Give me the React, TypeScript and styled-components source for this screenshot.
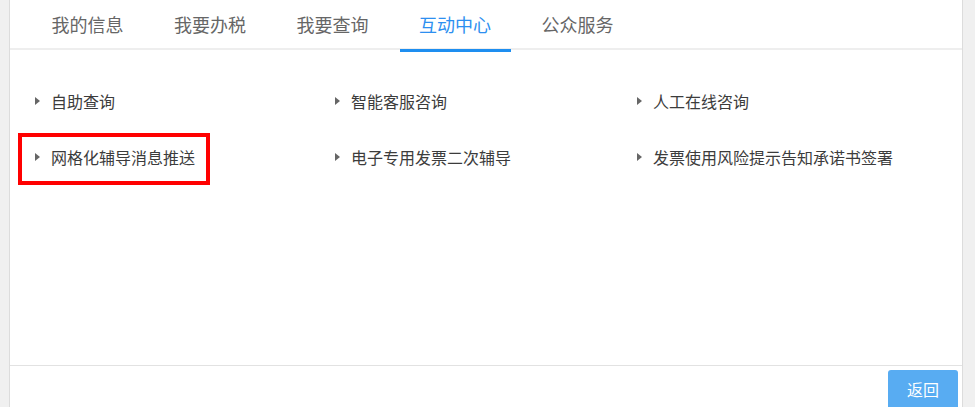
import React from "react";
import styled, { createGlobalStyle } from "styled-components";

const Global = createGlobalStyle`
  html, body { margin: 0; padding: 0; background: #f0f0f0; }
  body { font-family: "Microsoft YaHei", "Noto Sans CJK SC", "Noto Sans", sans-serif; }
`;

const Page = styled.div`
  width: 975px;
  height: 407px;
  overflow: hidden;
  background: #f0f0f0;
`;

const Panel = styled.div`
  margin-left: 9px;
  width: 952px;
  height: 407px;
  background: #fff;
  border-left: 1px solid #dcdcdc;
  border-right: 1px solid #dcdcdc;
  display: flex;
  flex-direction: column;
`;

const TabBar = styled.div`
  height: 48px;
  border-bottom: 2px solid #eeeeee;
  display: flex;
  gap: 11.5px;
  padding-left: 22px;
  flex-shrink: 0;
`;

const Tab = styled.div<{ $active?: boolean }>`
  height: 47px;
  margin-bottom: -2px;
  padding: 0 19.5px 2px;
  display: flex;
  align-items: center;
  font-size: 18px;
  color: ${(p) => (p.$active ? "#2d8ff0" : "#666")};
  border-bottom: 3px solid ${(p) => (p.$active ? "#1e8ef0" : "transparent")};
`;

const Content = styled.div`
  height: 315px;
  flex-shrink: 0;
  padding: 23px 0 0 25px;
  box-sizing: border-box;
  display: grid;
  grid-template-columns: 300px 302px 300px;
  grid-auto-rows: 56px;
  align-content: start;
`;

const Item = styled.div<{ $marked?: boolean }>`
  position: relative;
  display: flex;
  align-items: center;
  font-size: 16px;
  color: #3c3c3c;
  &::after {
    content: "";
    display: ${(p) => (p.$marked ? "block" : "none")};
    position: absolute;
    left: -17px;
    top: 4px;
    width: 184px;
    height: 44px;
    border: 4px solid #f00;
  }
`;

const Arrow = styled.span`
  width: 0;
  height: 0;
  border-top: 4px solid transparent;
  border-bottom: 4px solid transparent;
  border-left: 5px solid #666;
  margin-right: 11px;
  flex-shrink: 0;
`;

const Footer = styled.div`
  flex-shrink: 0;
  border-top: 1px solid #e2e2e2;
  display: flex;
  justify-content: flex-end;
  padding: 4px 4px 0 0;
`;

const Button = styled.button`
  width: 70px;
  height: 40px;
  border: none;
  border-radius: 3px;
  background: #58acf2;
  color: #fff;
  font-family: inherit;
  font-size: 16px;
  padding: 0 0 3px 0;
`;

const tabs = ["我的信息", "我要办税", "我要查询", "互动中心", "公众服务"];
const items = [
  "自助查询",
  "智能客服咨询",
  "人工在线咨询",
  "网格化辅导消息推送",
  "电子专用发票二次辅导",
  "发票使用风险提示告知承诺书签署",
];

export default function App() {
  return (
    <Page>
      <Global />
      <Panel>
        <TabBar>
          {tabs.map((t) => (
            <Tab key={t} $active={t === "互动中心"}>
              {t}
            </Tab>
          ))}
        </TabBar>
        <Content>
          {items.map((it) => (
            <Item key={it} $marked={it === "网格化辅导消息推送"}>
              <Arrow />
              {it}
            </Item>
          ))}
        </Content>
        <Footer>
          <Button>返回</Button>
        </Footer>
      </Panel>
    </Page>
  );
}
